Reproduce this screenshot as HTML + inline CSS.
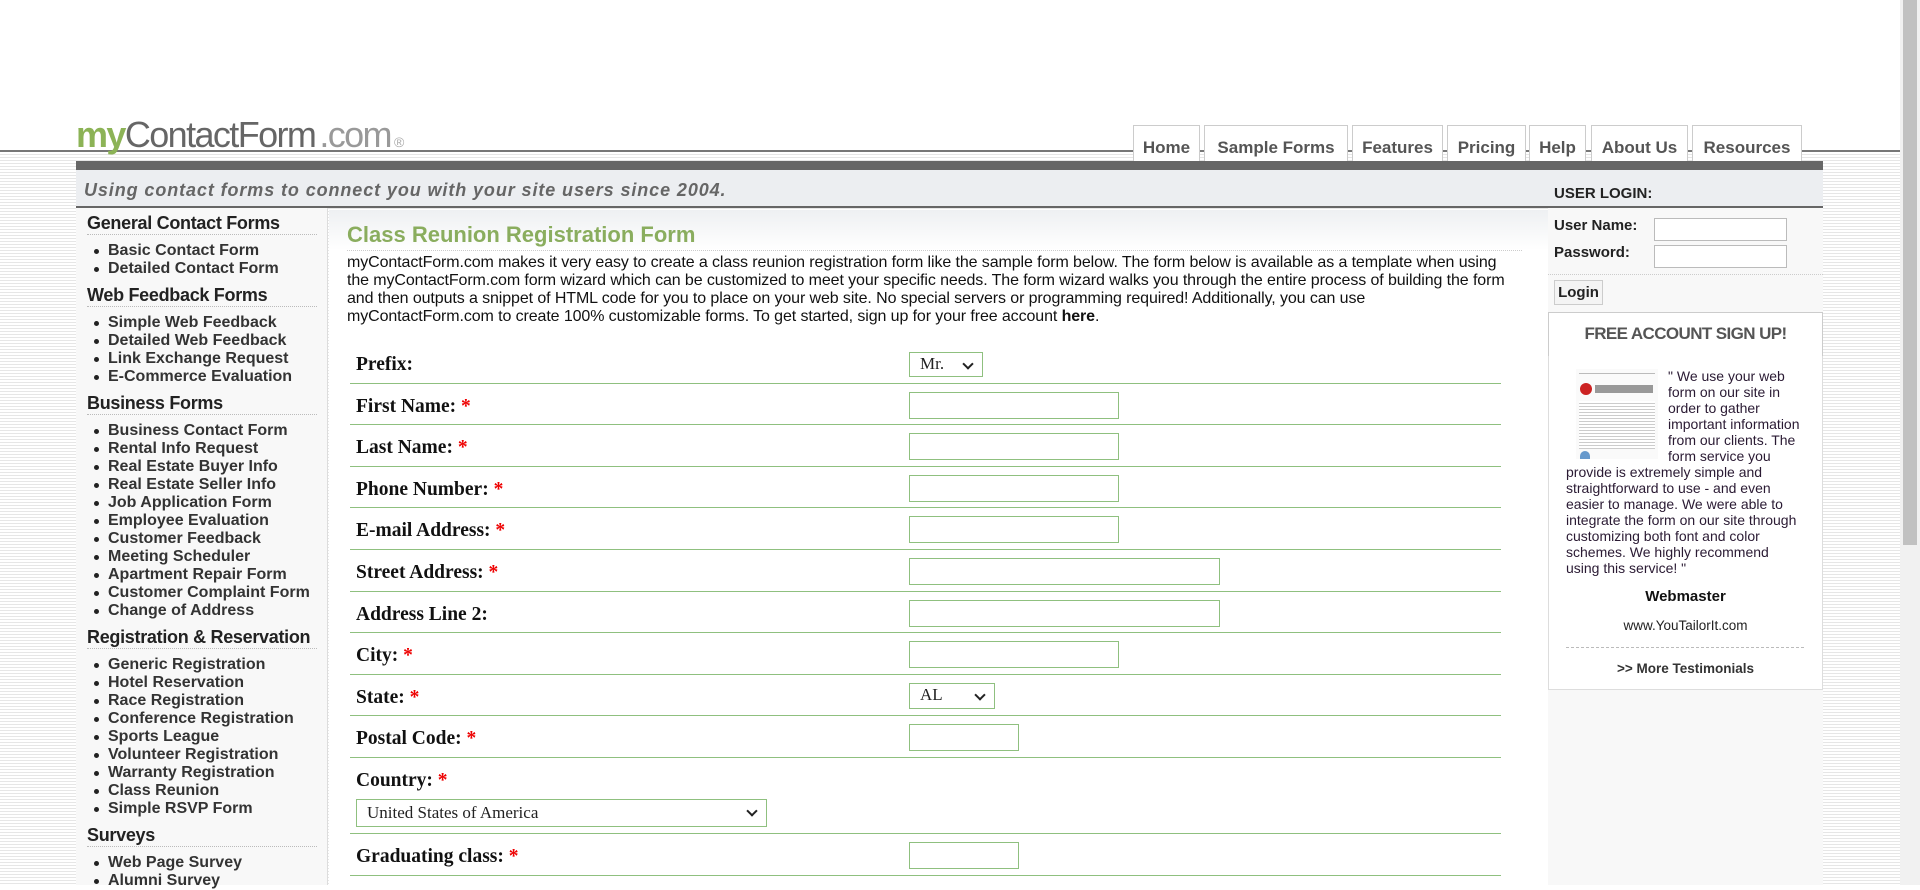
<!DOCTYPE html>
<html><head><meta charset="utf-8">
<style>
*{box-sizing:border-box;margin:0;padding:0}
body{width:1920px;height:885px;overflow:hidden;position:relative;background:#fff;font-family:"Liberation Sans",Arial,sans-serif;color:#222}
.stripes{position:absolute;top:152px;left:0;width:1900px;height:733px;background:repeating-linear-gradient(#fff 0 2px,#e6e6e6 2px 3px)}
.hline{position:absolute;top:150px;left:0;width:1900px;height:2px;background:#777}
.logo{position:absolute;left:76px;top:113px;font-size:36px;letter-spacing:-1.6px;line-height:44px;white-space:nowrap}
.logo .my{color:#8cb356;font-weight:bold}
.logo .cf{color:#666}
.logo .com{color:#999;margin-left:4px}
.logo .r{font-size:14px;color:#aaa;letter-spacing:0;margin-left:3px}
.tab{position:absolute;top:125px;height:36px;background:#fff;border:1px solid #ccc;border-bottom:none;font-weight:bold;font-size:17px;color:#555;text-align:center;line-height:43px}
.darkbar{position:absolute;left:76px;top:161px;width:1747px;height:9px;background:#666}
.band{position:absolute;left:76px;top:170px;width:1747px;height:38px;background:#eceef1;border-bottom:2px solid #666}
.tag{position:absolute;left:84px;top:180px;font-size:18px;font-weight:bold;font-style:italic;color:#666;letter-spacing:.9px}
.side{position:absolute;left:76px;top:208px;width:252px;height:677px;background:#f8f8f8;border-right:1px solid #ddd;padding:4px 0 0 11px}
.side h3{font-size:18px;line-height:22px;color:#222;letter-spacing:-.3px;width:230px;border-bottom:1px dotted #bbb;margin-bottom:7px}
.side ul{list-style:none;margin-bottom:6px}
.side li{font-size:16px;font-weight:bold;color:#333;line-height:18px;padding-left:21px;position:relative}
.side li:before{content:"";position:absolute;left:7px;top:7px;width:5px;height:5px;border-radius:50%;background:#222}
.main{position:absolute;left:329px;top:210px;width:1219px;height:675px;background:linear-gradient(#eef0f2,#fff 40px)}
.title{position:absolute;left:347px;top:222px;font-size:22px;font-weight:bold;color:#8aad5e;line-height:26px}
.tline{position:absolute;left:347px;top:250px;width:1175px;border-top:1px dotted #ccc}
.intro{position:absolute;left:347px;top:254px;font-size:16px;line-height:18px;color:#111;white-space:nowrap;letter-spacing:-.1px}
.form{position:absolute;left:350px;top:342px;width:1151px}
.row{height:41.6px;border-bottom:1.5px solid #8fc07f;position:relative}
.row .l{position:absolute;left:6px;top:12px;font-family:"Liberation Serif",serif;font-weight:bold;font-size:19.5px;color:#111}
.row .l b{color:#e00;font-weight:bold}
.inp{position:absolute;left:559px;top:8px;width:210px;height:27px;border:1.5px solid #8fc07f;background:#fff}
.sel{position:absolute;left:559px;border:1.5px solid #8fc07f;background:#fff;font-family:"Liberation Serif",serif;font-size:17px;padding-left:10px;line-height:22px}
.sel:after{content:"";position:absolute;right:10px;top:7px;width:6px;height:6px;border-right:2px solid #222;border-bottom:2px solid #222;transform:rotate(45deg)}
.right{position:absolute;left:1548px;top:208px;width:275px;height:677px;background:#f8f8f8}
.rt{position:absolute;font-weight:bold;font-size:15px;color:#222}
.rin{position:absolute;left:1654px;width:133px;height:23px;border:1px solid #bbb;background:#fff}
.btn{position:absolute;left:1554px;top:280px;width:49px;height:25px;border:1px solid #ccc;background:#f4f4f4;font-weight:bold;font-size:15px;text-align:center;line-height:23px}
.free{position:absolute;left:1548px;top:312px;width:275px;height:45px;background:#fff;border:1px solid #ccc;text-align:center;font-weight:bold;font-size:17px;color:#555;line-height:42px;letter-spacing:-.6px}
.test{position:absolute;left:1548px;top:356px;width:275px;height:334px;background:#fff;border:1px solid #ddd;border-top:none}
.ttext{position:absolute;left:1566px;top:368px;width:240px;font-size:14px;line-height:16px;color:#2a1a33}
.img{float:left;width:82px;height:90px;margin:1px 10px 0 10px;background:#fafafa;position:relative}
.sb{position:absolute;left:1900px;top:0;width:20px;height:885px;background:#f1f1f1}
.sbt{position:absolute;left:1903px;top:0;width:14px;height:545px;background:#c1c1c1}
</style></head><body>
<div class="stripes"></div>
<div class="hline"></div>
<div class="logo"><span class="my">my</span><span class="cf">ContactForm</span><span class="com">.com</span><span class="r">®</span></div>
<div class="tab" style="left:1133px;width:67px">Home</div>
<div class="tab" style="left:1204px;width:144px">Sample Forms</div>
<div class="tab" style="left:1352px;width:91px">Features</div>
<div class="tab" style="left:1447px;width:79px">Pricing</div>
<div class="tab" style="left:1529px;width:57px">Help</div>
<div class="tab" style="left:1591px;width:97px">About Us</div>
<div class="tab" style="left:1692px;width:110px">Resources</div>
<div class="darkbar"></div>
<div class="band"></div>
<div class="tag">Using contact forms to connect you with your site users since 2004.</div>
<div class="side">
<h3>General Contact Forms</h3>
<ul><li>Basic Contact Form</li><li>Detailed Contact Form</li></ul>
<h3>Web Feedback Forms</h3>
<ul><li>Simple Web Feedback</li><li>Detailed Web Feedback</li><li>Link Exchange Request</li><li>E-Commerce Evaluation</li></ul>
<h3>Business Forms</h3>
<ul><li>Business Contact Form</li><li>Rental Info Request</li><li>Real Estate Buyer Info</li><li>Real Estate Seller Info</li><li>Job Application Form</li><li>Employee Evaluation</li><li>Customer Feedback</li><li>Meeting Scheduler</li><li>Apartment Repair Form</li><li>Customer Complaint Form</li><li>Change of Address</li></ul>
<h3>Registration &amp; Reservation</h3>
<ul><li>Generic Registration</li><li>Hotel Reservation</li><li>Race Registration</li><li>Conference Registration</li><li>Sports League</li><li>Volunteer Registration</li><li>Warranty Registration</li><li>Class Reunion</li><li>Simple RSVP Form</li></ul>
<h3>Surveys</h3>
<ul><li>Web Page Survey</li><li>Alumni Survey</li></ul>
</div>
<div class="main"></div>
<div class="title">Class Reunion Registration Form</div>
<div class="tline"></div>
<div class="intro">myContactForm.com makes it very easy to create a class reunion registration form like the sample form below. The form below is available as a template when using<br>the myContactForm.com form wizard which can be customized to meet your specific needs. The form wizard walks you through the entire process of building the form<br>and then outputs a snippet of HTML code for you to place on your web site. No special servers or programming required! Additionally, you can use<br>myContactForm.com to create 100% customizable forms. To get started, sign up for your free account <b>here</b>.</div>
<div class="form">
<div class="row"><span class="l">Prefix:</span><div class="sel" style="top:10px;width:74px;height:25px">Mr.</div></div>
<div class="row"><span class="l">First Name: <b>*</b></span><div class="inp"></div></div>
<div class="row"><span class="l">Last Name: <b>*</b></span><div class="inp"></div></div>
<div class="row"><span class="l">Phone Number: <b>*</b></span><div class="inp"></div></div>
<div class="row"><span class="l">E-mail Address: <b>*</b></span><div class="inp"></div></div>
<div class="row"><span class="l">Street Address: <b>*</b></span><div class="inp" style="width:311px"></div></div>
<div class="row"><span class="l">Address Line 2:</span><div class="inp" style="width:311px"></div></div>
<div class="row"><span class="l">City: <b>*</b></span><div class="inp"></div></div>
<div class="row"><span class="l">State: <b>*</b></span><div class="sel" style="top:8px;width:86px;height:26px">AL</div></div>
<div class="row"><span class="l">Postal Code: <b>*</b></span><div class="inp" style="width:110px"></div></div>
<div class="row" style="height:76px"><span class="l">Country: <b>*</b></span><div class="sel" style="left:6px;top:41px;width:411px;height:28px;line-height:25px">United States of America</div></div>
<div class="row"><span class="l">Graduating class: <b>*</b></span><div class="inp" style="width:110px"></div></div>
</div>
<div class="right"></div>
<div class="rt" style="left:1554px;top:185px">USER LOGIN:</div>
<div class="rt" style="left:1554px;top:217px">User Name:</div>
<div class="rt" style="left:1554px;top:244px">Password:</div>
<div class="rin" style="top:218px"></div>
<div class="rin" style="top:245px"></div>
<div style="position:absolute;left:1548px;top:274px;width:275px;border-top:1px dotted #ccc"></div>
<div class="btn">Login</div>
<div class="free">FREE ACCOUNT SIGN UP!</div>
<div class="test"></div>
<div class="ttext"><div class="img">
<div style="position:absolute;left:3px;top:4px;width:76px;height:1px;background:#bbb"></div>
<div style="position:absolute;left:4px;top:14px;width:12px;height:12px;border-radius:50%;background:#c22"></div>
<div style="position:absolute;left:19px;top:16px;width:58px;height:8px;background:#999"></div>
<div style="position:absolute;left:3px;top:32px;width:76px;height:48px;background:repeating-linear-gradient(#fff 0 2px,#ccc 2px 3px)"></div>
<div style="position:absolute;left:4px;top:82px;width:10px;height:8px;border-radius:5px 5px 0 0;background:#69c"></div>
</div>" We use your web form on our site in order to gather important information from our clients. The form service you provide is extremely simple and straightforward to use - and even easier to manage. We were able to integrate the form on our site through customizing both font and color schemes. We highly recommend using this service! "</div>
<div style="position:absolute;left:1548px;top:588px;width:275px;text-align:center;font-weight:bold;font-size:15px;color:#111">Webmaster</div>
<div style="position:absolute;left:1548px;top:618px;width:275px;text-align:center;font-size:13.5px;color:#222">www.YouTailorIt.com</div>
<div style="position:absolute;left:1566px;top:647px;width:238px;border-top:1px dashed #bbb"></div>
<div style="position:absolute;left:1548px;top:661px;width:275px;text-align:center;font-weight:bold;font-size:13.5px;color:#333">&gt;&gt; More Testimonials</div>
<div class="sb"></div><div class="sbt"></div>
</body></html>
